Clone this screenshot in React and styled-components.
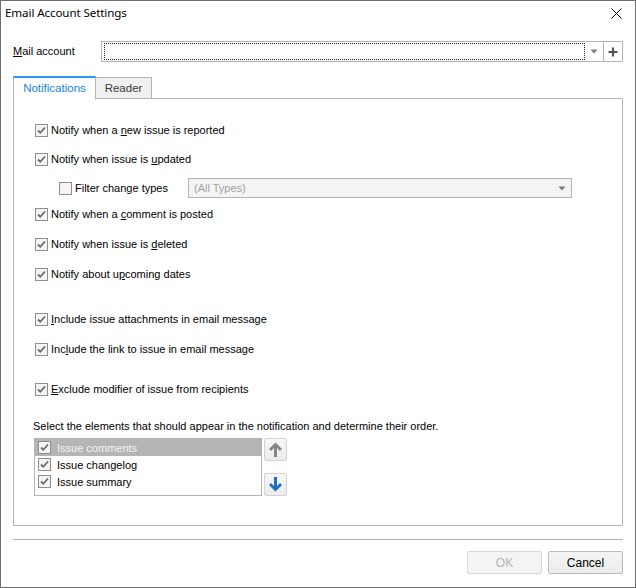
import React from 'react';
import styled, { createGlobalStyle } from 'styled-components';

const GlobalStyle = createGlobalStyle`
  body {
    margin: 0;
    background: #ffffff;
    font-family: "Liberation Sans", Arial, sans-serif;
    font-size: 11px;
    color: #000;
  }
`;

const Window = styled.div`
  width: 636px;
  height: 588px;
  box-sizing: border-box;
  border: 1px solid #6f6f6f;
  background: #fff;
  display: flex;
  flex-direction: column;
`;

const TitleBar = styled.div`
  height: 30px;
  display: flex;
  align-items: flex-start;
  justify-content: space-between;
  padding: 0 0 0 4px;
`;

const Title = styled.div`
  font-family: "Noto Sans", "Liberation Sans", sans-serif;
  font-size: 11.6px;
  line-height: 14px;
  margin-top: 5px;
  letter-spacing: -0.1px;
`;

const CloseButton = styled.div`
  width: 30px;
  height: 24px;
  display: flex;
  align-items: center;
  justify-content: center;
  margin-right: 4px;
`;

const Body = styled.div`
  flex: 1;
  display: flex;
  flex-direction: column;
  padding: 0 12px;
`;

const MailRow = styled.div`
  margin-top: 10px;
  height: 21px;
  display: flex;
  align-items: center;
`;

const FieldLabel = styled.div`
  width: 88px;
  margin-top: -1px;
  u { text-decoration: underline; }
`;

const Combo = styled.div`
  flex: 1;
  height: 21px;
  box-sizing: border-box;
  border: 1px solid #b4b4b4;
  display: flex;
  background: ${p => (p.$disabled ? '#f4f4f4' : '#fff')};
`;

const ComboField = styled.div`
  flex: 1;
  margin: 1px 0 1px 2px;
  border: 1px dotted ${p => (p.$focus ? '#222' : 'transparent')};
  display: flex;
  align-items: center;
  padding-left: 2px;
  color: #a3a3a3;
`;

const ComboArrow = styled.div`
  width: 18px;
  display: flex;
  align-items: center;
  justify-content: center;
`;

const PlusCell = styled.div`
  width: 18px;
  border-left: 1px solid #b4b4b4;
  display: flex;
  align-items: center;
  justify-content: center;
`;

const TabStrip = styled.div`
  margin-top: 14px;
  display: flex;
  align-items: flex-end;
  height: 23px;
  position: relative;
  z-index: 1;
`;

const Tab = styled.div`
  box-sizing: border-box;
  height: ${p => (p.$active ? '24px' : '22px')};
  width: ${p => p.$w}px;
  border: 1px solid #b4b4b4;
  border-top: ${p => (p.$active ? '2px solid #2b9af3' : '1px solid #b4b4b4')};
  border-bottom: ${p => (p.$active ? '1px solid #fff' : '1px solid #b4b4b4')};
  border-left: ${p => (p.$active ? '1px solid #b4b4b4' : 'none')};
  background: ${p => (p.$active ? '#fff' : '#f0f0f0')};
  color: ${p => (p.$active ? '#1484d8' : '#3a3a3a')};
  display: flex;
  justify-content: center;
  padding-top: 4px;
  margin-bottom: ${p => (p.$active ? '-1px' : '0')};
  font-size: 11.5px;
`;

const Panel = styled.div`
  height: 428px;
  box-sizing: border-box;
  border: 1px solid #b4b4b4;
  margin-top: -1px;
  padding: 23px 0 0 20px;
  display: flex;
  flex-direction: column;
`;

const Row = styled.div`
  display: flex;
  align-items: center;
  height: ${p => p.$h || 16}px;
  margin-top: ${p => p.$gap || 0}px;
  padding-left: ${p => p.$indent || 1}px;
  u { text-decoration: underline; }
`;

const Box = styled.span`
  width: 13px;
  height: 13px;
  box-sizing: border-box;
  border: 1px solid #8e8e8e;
  background: #f4f4f4;
  display: inline-flex;
  align-items: center;
  justify-content: center;
  flex: none;
`;

const RowText = styled.span`
  margin-left: 3px;
  white-space: nowrap;
`;

const FilterCombo = styled(Combo)`
  flex: none;
  width: 384px;
  height: 20px;
  margin-left: auto;
  margin-right: 50px;
`;

const Hint = styled.div`
  margin-top: 22px;
  margin-left: -1px;
  line-height: 14px;
`;

const ListArea = styled.div`
  margin-top: 5px;
  display: flex;
  gap: 2px;
`;

const ListBox = styled.div`
  width: 228px;
  height: 58px;
  box-sizing: border-box;
  border: 1px solid #b4b4b4;
`;

const ListItem = styled.div`
  height: 17px;
  display: flex;
  align-items: center;
  padding-left: 3px;
  background: ${p => (p.$selected ? '#b5b5b5' : 'transparent')};
  color: ${p => (p.$selected ? '#f4f4f4' : '#000')};
  span:last-child { margin-left: 6px; }
`;

const MoveButtons = styled.div`
  display: flex;
  flex-direction: column;
  justify-content: space-between;
  height: 58px;
`;

const IconButton = styled.div`
  width: 23px;
  height: 23px;
  box-sizing: border-box;
  border: 1px solid #d2d2d2;
  border-radius: 2px;
  background: linear-gradient(#f7f7f7, #ebebeb);
  display: flex;
  align-items: center;
  justify-content: center;
`;

const Separator = styled.div`
  margin-top: 13px;
  height: 1px;
  background: #b4b4b4;
`;

const Footer = styled.div`
  margin-top: 11px;
  display: flex;
  justify-content: flex-end;
  gap: 6px;
`;

const Button = styled.div`
  width: 75px;
  height: 23px;
  box-sizing: border-box;
  border: 1px solid ${p => (p.$disabled ? '#d8d8d8' : '#bcbcbc')};
  border-radius: 2px;
  background: ${p => (p.$disabled ? '#f4f4f4' : 'linear-gradient(#f4f4f4, #ececec)')};
  color: ${p => (p.$disabled ? '#b3b3b3' : '#000')};
  display: flex;
  align-items: center;
  justify-content: center;
  font-size: 12px;
`;

const Check = ({ checked }) => (
  <Box>
    {checked && (
      <svg width="11" height="11" viewBox="0 0 11 11">
        <path d="M2 5.5 L4.3 7.8 L9 2.5" fill="none" stroke="#6a6a6a" strokeWidth="1.8" />
      </svg>
    )}
  </Box>
);

const DownTriangle = () => (
  <svg width="8" height="5" viewBox="0 0 8 5">
    <path d="M0.5 0.5 H7.5 L4 4.5 Z" fill="#7a7a7a" />
  </svg>
);

const CheckRow = ({ gap, children }) => (
  <Row $gap={gap}>
    <Check checked />
    <RowText>{children}</RowText>
  </Row>
);

const listItems = ['Issue comments', 'Issue changelog', 'Issue summary'];

export default function App() {
  return (
    <>
      <GlobalStyle />
      <Window>
        <TitleBar>
          <Title>Email Account Settings</Title>
          <CloseButton>
            <svg width="11" height="11" viewBox="0 0 11 11">
              <path d="M0.5 0.5 L10.5 10.5 M10.5 0.5 L0.5 10.5" stroke="#000" strokeWidth="1" />
            </svg>
          </CloseButton>
        </TitleBar>
        <Body>
          <MailRow>
            <FieldLabel><u>M</u>ail account</FieldLabel>
            <Combo>
              <ComboField $focus />
              <ComboArrow><DownTriangle /></ComboArrow>
              <PlusCell>
                <svg width="10" height="10" viewBox="0 0 10 10">
                  <path d="M5 0.5 V9.5 M0.5 5 H9.5" stroke="#555" strokeWidth="2.2" />
                </svg>
              </PlusCell>
            </Combo>
          </MailRow>

          <TabStrip>
            <Tab $active $w={83}>Notifications</Tab>
            <Tab $w={56}>Reader</Tab>
          </TabStrip>

          <Panel>
            <CheckRow>Notify when a <u>n</u>ew issue is reported</CheckRow>
            <CheckRow gap={13}>Notify when issue is <u>u</u>pdated</CheckRow>
            <Row $gap={11} $h={20} $indent={25}>
              <Check />
              <RowText>Filter change types</RowText>
              <FilterCombo $disabled>
                <ComboField>(All Types)</ComboField>
                <ComboArrow><DownTriangle /></ComboArrow>
              </FilterCombo>
            </Row>
            <CheckRow gap={8}>Notify when a <u>c</u>omment is posted</CheckRow>
            <CheckRow gap={14}>Notify when issue is <u>d</u>eleted</CheckRow>
            <CheckRow gap={14}>Notify about u<u>p</u>coming dates</CheckRow>
            <CheckRow gap={29}><u>I</u>nclude issue attachments in email message</CheckRow>
            <CheckRow gap={14}>Inc<u>l</u>ude the link to issue in email message</CheckRow>
            <CheckRow gap={24}><u>E</u>xclude modifier of issue from recipients</CheckRow>

            <Hint>Select the elements that should appear in the notification and determine their order.</Hint>
            <ListArea>
              <ListBox>
                {listItems.map((item, i) => (
                  <ListItem key={item} $selected={i === 0}>
                    <Check checked />
                    <span>{item}</span>
                  </ListItem>
                ))}
              </ListBox>
              <MoveButtons>
                <IconButton>
                  <svg width="17" height="17" viewBox="0 0 17 17">
                    <path d="M8.5 1.5 L15 8 L13 10 L10 7 V16 H7 V7 L4 10 L2 8 Z" fill="#858585" />
                  </svg>
                </IconButton>
                <IconButton>
                  <svg width="17" height="17" viewBox="0 0 17 17">
                    <path d="M8.5 15.5 L15 9 L13 7 L10 10 V1 H7 V10 L4 7 L2 9 Z" fill="#1e6fc4" />
                  </svg>
                </IconButton>
              </MoveButtons>
            </ListArea>
          </Panel>

          <Separator />
          <Footer>
            <Button $disabled>OK</Button>
            <Button>Cancel</Button>
          </Footer>
        </Body>
      </Window>
    </>
  );
}
